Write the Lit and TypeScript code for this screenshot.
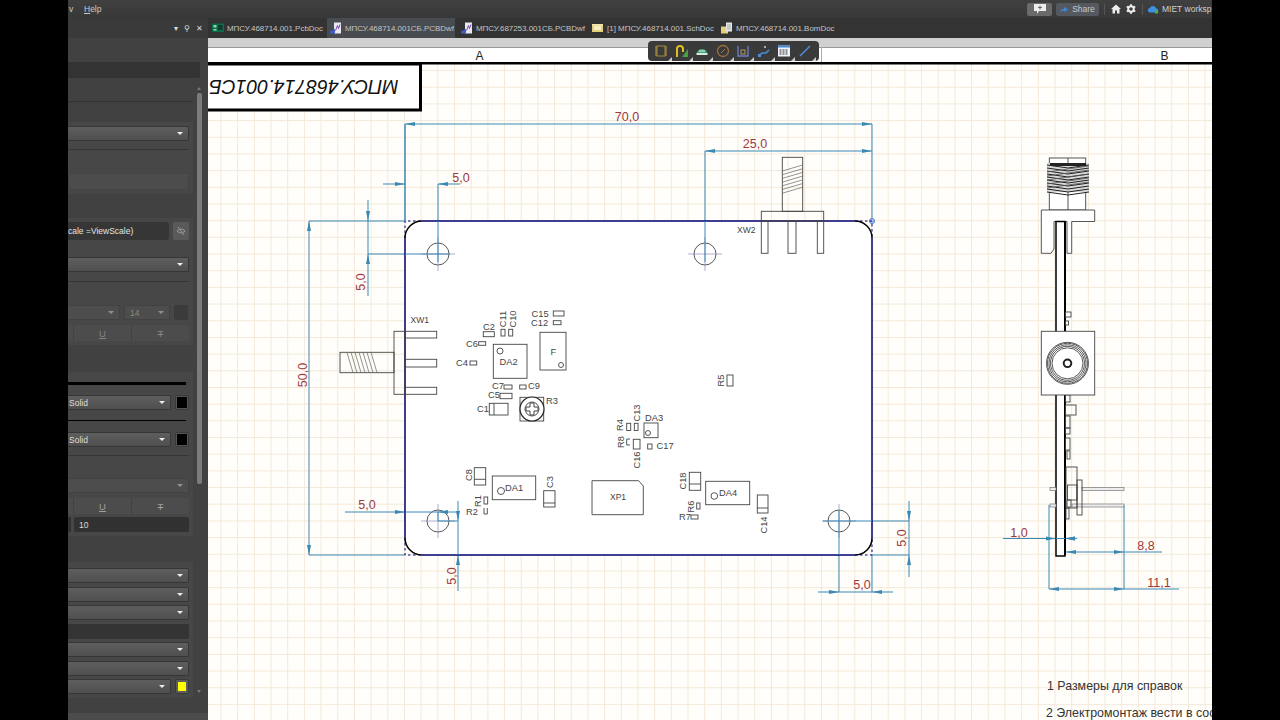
import { LitElement, html, css, svg } from "lit";
import { customElement } from "lit/decorators.js";

type Row = { k: string; g: number; t?: string; h?: number; c?: string };

const SECTIONS: { gap: number; rows: Row[] }[] = [
  { gap: 20, rows: [
    { k: "select", g: 4 }, { k: "div", g: 8 }, { k: "input", g: 23, h: 17, c: "faint" } ] },
  { gap: 24, rows: [
    { k: "scale", g: 4, t: "cale =ViewScale)" }, { k: "select", g: 17 }, { k: "div", g: 9 },
    { k: "font", g: 23 }, { k: "toggles", g: 5, c: "off" } ] },
  { gap: 27, rows: [
    { k: "black", g: 10, h: 3 }, { k: "solid", g: 10 }, { k: "black", g: 10, h: 1 }, { k: "solid", g: 11 },
    { k: "div", g: 8 }, { k: "select", g: 22, c: "off" }, { k: "toggles", g: 5 }, { k: "num", g: 3, t: "10" } ] },
  { gap: 26, rows: [
    { k: "select", g: 6 }, { k: "select", g: 3.5 }, { k: "select", g: 3.5 }, { k: "input", g: 3.5, h: 15 },
    { k: "select", g: 3.5 }, { k: "select", g: 3.5 }, { k: "color", g: 3.5 } ] },
];

const TABS = [
  { t: "МПСУ.468714.001.PcbDoc", i: "pcb" },
  { t: "МПСУ.468714.001СБ.PCBDwf", i: "dwf", on: true },
  { t: "МПСУ.687253.001СБ.PCBDwf", i: "dwf" },
  { t: "[1] МПСУ.468714.001.SchDoc", i: "sch" },
  { t: "МПСУ.468714.001.BomDoc", i: "bom" },
];

const tabIcon = (i: string) => {
  if (i === "pcb") return svg`<rect x="0" y="1.5" width="12" height="8.5" fill="#0f6b4a"/><rect x="1.5" y="3" width="3" height="2.5" fill="#7fe0b0"/><rect x="6" y="3" width="4.5" height="5" fill="#173a2c"/><rect x="1.5" y="7" width="3" height="1.5" fill="#7fe0b0"/>`;
  if (i === "dwf") return svg`<path d="M4 0.5h7v11H4z" fill="#e8e8f0"/><path d="M5.5 8.5l2-5 1 3 1.500-4" stroke="#7a3fb0" fill="none"/><path d="M0 9.500l5-2.500v4.500H0z" fill="#3f5cc8"/>`;
  if (i === "sch") return svg`<rect x="0" y="2" width="11" height="8" fill="#e6cf78"/><rect x="0" y="2" width="11" height="1.500" fill="#f3e6ae"/><rect x="2" y="4" width="7" height="4" fill="#f5eec8"/>`;
  return svg`<rect x="0" y="4.500" width="7" height="7" fill="#e6cf78"/><rect x="5" y="0.500" width="6" height="9" fill="#e4e6ea"/><path d="M6 3h4M6 5h4M6 7h4" stroke="#8a93a0" stroke-width=".7"/>`;
};

const TOOLS = [
  svg`<rect x="3" y="2" width="8" height="10" fill="none" stroke="#a98a3a"/><path d="M1 3h2M1 5h2M1 7h2M1 9h2M1 11h2M11 3h2M11 5h2M11 7h2M11 9h2M11 11h2" stroke="#b89a44"/>`,
  svg`<path d="M2 13V5a3 3 0 0 1 6 0v3" fill="none" stroke="#e0c020" stroke-width="2"/><path d="M7 13l6-8v8z" fill="#48a040"/><circle cx="5" cy="4.500" r="1" fill="#333"/>`,
  svg`<path d="M2 9a5 4 0 0 1 10 0z" fill="#46a078"/><rect x="1.500" y="9" width="11" height="2" fill="#d8e8e0"/><path d="M4 7h6" stroke="#cfe"/>`,
  svg`<circle cx="7" cy="7" r="5.500" fill="none" stroke="#a0703a" stroke-width="1.300"/><path d="M5 9l4-4" stroke="#a0703a"/>`,
  svg`<path d="M2 2v10h10V2" fill="none" stroke="#6f7fc8" stroke-width="1.300"/><rect x="5" y="6" width="4" height="4" fill="none" stroke="#b09a60"/>`,
  svg`<path d="M2 12l3-3h4l3-3" fill="none" stroke="#4a90d8" stroke-width="1.500"/><circle cx="8" cy="3" r="1" fill="#c8d0e0"/><rect x="1" y="10" width="3" height="3" fill="#4a90d8"/>`,
  svg`<rect x="1" y="1.500" width="12" height="11" fill="#f0f4fa"/><rect x="1" y="1.500" width="12" height="2" fill="#3f88d8"/><path d="M2.500 6h9M2.500 8h9M2.500 10h9" stroke="#333" stroke-dasharray="2 1"/>`,
  svg`<path d="M2 12L12 2" stroke="#4f8fd8" stroke-width="1.500"/>`,
];

const DIM = "#3a88b4";
const L = (x1: number, y1: number, x2: number, y2: number) =>
  svg`<line class="dim" x1=${x1} y1=${y1} x2=${x2} y2=${y2}></line>`;
const A = (x: number, y: number, d: "l" | "r" | "u" | "d") => {
  const n = 10, w = 2;
  const p = d === "r" ? `${x},${y} ${x - n},${y - w} ${x - n},${y + w}`
    : d === "l" ? `${x},${y} ${x + n},${y - w} ${x + n},${y + w}`
    : d === "d" ? `${x},${y} ${x - w},${y - n} ${x + w},${y - n}`
    : `${x},${y} ${x - w},${y + n} ${x + w},${y + n}`;
  return svg`<polygon points=${p} fill=${DIM}></polygon>`;
};
const DT = (x: number, y: number, t: string, rot = false) =>
  svg`<text class="dt" x=${x} y=${y} transform=${rot ? `rotate(-90 ${x} ${y})` : ""}>${t}</text>`;
const R = (x: number, y: number, x2: number, y2: number) =>
  svg`<rect class="c" x=${x} y=${y} width=${x2 - x} height=${y2 - y}></rect>`;
const LB = (x: number, y: number, t: string) => svg`<text class="lb" x=${x} y=${y}>${t}</text>`;
const LX = (x: number, y: number, t: string) => svg`<text class="lb xw" x=${x} y=${y}>${t}</text>`;
const LV = (x: number, y: number, t: string) =>
  svg`<text class="lb mid" x=${x} y=${y} transform="rotate(-90 ${x} ${y})">${t}</text>`;
const C = (x: number, y: number, r: number) => svg`<circle class="c" cx=${x} cy=${y} r=${r}></circle>`;
const H = (x: number, y: number) => svg`
  <circle class="c" cx=${x} cy=${y} r="11"></circle>
  <line class="cross" x1=${x - 17} y1=${y} x2=${x + 17} y2=${y}></line>
  <line class="cross" x1=${x} y1=${y - 17} x2=${x} y2=${y + 17}></line>`;

const range = (n: number) => Array.from({ length: n }, (_, i) => i);
const GX = range(62).map((i) => 204.3 + i * 16.68);
const GY = range(42).map((i) => 37.2 + i * 16.68).filter((y) => y > 64);

const board = svg`
  <rect x="405" y="221" width="467" height="334" rx="17" fill="#fff"></rect>
  <path d="M405 238V221H422M855 221H872V238M405 538V555H422M855 555H872V538" fill="none" stroke="#000080" stroke-dasharray="2.500 2.500"></path>
  <path d="M422 221H855M872 238V538M855 555H422M405 538V238" fill="none" stroke="#000070" stroke-width="1.500"></path>
  <path d="M405 238A17 17 0 0 1 422 221M855 221A17 17 0 0 1 872 238M872 538A17 17 0 0 1 855 555M422 555A17 17 0 0 1 405 538" fill="none" stroke="#000" stroke-width="1.500"></path>
`;

const parts = svg`
  ${H(438, 254)}${H(705, 254)}${H(438, 521)}${H(839, 521)}
  ${R(782.3, 157.3, 802.7, 211.3)}
  ${range(7).map((i) => svg`<line class="th" x1="782.300" y1=${171 + i * 3.7} x2="802.700" y2=${165 + i * 3.7}></line>`)}
  ${R(761.3, 211.3, 823.7, 221)}${R(761.3, 221, 768, 253.3)}${R(788, 221, 796, 253.3)}${R(817.3, 221, 823.7, 253.3)}
  ${LX(737, 232.5, "XW2")}
  ${R(340, 352.3, 394, 372.7)}
  ${range(7).map((i) => svg`<line class="th" x1=${347 + i * 4} y1="352.300" x2=${353 + i * 4} y2="372.700"></line>`)}
  ${R(394, 331.3, 405, 394.3)}${R(405, 331.3, 436.7, 338)}${R(405, 359.3, 436.7, 367)}${R(405, 387.3, 436.7, 394.3)}
  ${LX(410.5, 323, "XW1")}
  ${LB(531.5, 316.5, "C15")}${R(553.3, 311, 564, 316)}
  ${LB(531, 326, "C12")}${R(553.3, 320.7, 561, 324.700)}
  ${LV(506, 319, "C11")}${LV(516, 319, "C10")}${R(501, 329.3, 505, 336)}${R(508.7, 329.3, 512.7, 336)}
  ${LB(483, 329.5, "C2")}${R(483.3, 331.7, 494.3, 336.7)}
  ${LB(466, 347, "C6")}${R(478.7, 341.7, 485.7, 345.3)}
  ${LB(456, 366, "C4")}${R(470, 361, 476.7, 365)}
  ${R(493.3, 344.3, 527, 378.3)}${C(500, 351, 3)}${LB(499.5, 365, "DA2")}
  ${R(540, 332.3, 566, 370)}${C(561, 365, 2.5)}${LB(550.5, 355, "F")}
  ${LB(492, 389, "C7")}${R(504, 385, 512, 389)}${R(519.7, 385, 526, 389)}${LB(528, 389, "C9")}
  ${LB(488, 398, "C5")}${R(500, 393.3, 512, 398.7)}
  ${LB(477, 412, "C1")}${R(489.3, 403.3, 508, 415)}<line class="c" x1="494" y1="403.300" x2="494" y2="415"></line>
  ${R(520, 397.3, 543.7, 421)}
  <circle cx="532" cy="409" r="12" fill="#fff" stroke="#222" stroke-width="1.200"></circle>
  ${C(532, 409, 7)}
  <path d="M530 403h4v4h4v4h-4v4h-4v-4h-4v-4h4z" fill="none" stroke="#444"></path>
  ${LB(546, 404, "R3")}
  ${LV(640, 413, "C13")}${LV(622.5, 425, "R4")}${LV(624, 442, "R8")}${LV(640, 460, "C16")}
  ${R(626.7, 423.3, 630.7, 430.5)}${R(634.3, 423.3, 638, 430.5)}
  <path class="c" d="M630 439h-3.300v6H630"></path>
  ${R(633.3, 439.3, 640, 449)}
  ${LB(645, 420.5, "DA3")}${R(644, 423, 658, 437.7)}${C(648, 433, 2.5)}
  ${R(647.7, 444, 652, 449)}${LB(656.5, 449, "C17")}
  ${R(474.3, 467.7, 485.7, 485)}<line class="c" x1="474.300" y1="479.300" x2="485.700" y2="479.300"></line>${LV(471.5, 475, "C8")}
  ${R(492.3, 476, 535.7, 499.7)}${C(501, 491, 3.5)}${LB(505, 491, "DA1")}
  ${R(543.7, 490.7, 555, 507)}<line class="c" x1="543.700" y1="503" x2="555" y2="503"></line>${LV(553, 482, "C3")}
  ${LV(481, 501, "R1")}${R(484, 497, 487.7, 504)}${LB(466, 514.5, "R2")}
  <path class="c" d="M484 508v6h3.300v-6"></path>
  <path class="c" d="M592 480.700H638.700L643.300 486V514.700H592Z"></path>
  ${LX(610, 500, "XP1")}
  ${LV(724, 380.5, "R5")}${R(727, 375, 733, 386)}
  ${R(689.3, 472.3, 700.7, 490.3)}<line class="c" x1="689.300" y1="484" x2="700.700" y2="484"></line>${LV(686, 481, "C18")}
  ${R(705.7, 481.3, 749.7, 504.7)}${C(714.3, 496, 3.3)}${LB(719, 496, "DA4")}
  ${R(757.3, 495, 768, 513)}<line class="c" x1="757.300" y1="508" x2="768" y2="508"></line>${LV(767, 525, "C14")}
  ${LV(694, 506.5, "R6")}${R(696.7, 503, 700, 509)}${LB(679, 520, "R7")}${R(691, 515, 698, 519)}
`;

const sideView = svg`
  <rect class="c w" x="1049.300" y="158" width="36.400" height="52"></rect>
  <line class="c" x1="1068" y1="158" x2="1068" y2="210"></line>
  <rect x="1047" y="163" width="42" height="29" fill="#d8d8d8"></rect>
  ${range(10).map((i) => svg`<path d="M1047 ${165 + i * 3}L1068 ${168 + i * 3}L1089 ${165 + i * 3}" fill="none" stroke="#222" stroke-width="1"></path>`)}
  ${range(5).map((i) => svg`<path d="M1047 ${172 + i * 4}L1089 ${166 + i * 4}" fill="none" stroke="#555" stroke-width=".8"></path>`)}
  <rect x="1050" y="163" width="36" height="3" fill="#222"></rect>
  <path class="c w" d="M1041.300 210H1094.700V221.500H1071.700V253.300H1067V221.500H1054V249L1051 253.300H1041.300Z"></path>
  <rect x="1056" y="221.500" width="9" height="334.500" fill="#fff" stroke="#000" stroke-width="1.500"></rect>
  <line x1="1065" y1="222" x2="1065" y2="555" stroke="#000" stroke-width="2"></line>
  ${R(1065.5, 312, 1071, 317)}${R(1065.5, 321, 1068.5, 325)}
  ${R(1065.5, 395, 1070, 402)}${R(1065.5, 405, 1076, 415)}${R(1065.5, 416, 1070, 428)}
  ${R(1065.5, 428, 1070, 434)}${R(1065.5, 438, 1070, 450)}
  <rect class="c" x="1067" y="451" width="3" height="8"></rect>
  <rect class="c w" x="1041.300" y="331.300" width="53.400" height="63.700"></rect>
  ${[21, 20, 18.5, 17, 15.5].map((r) => svg`<circle class="c" cx="1067.500" cy="363.300" r=${r}></circle>`)}
  <circle cx="1067.500" cy="363.300" r="3.800" fill="#fff" stroke="#222" stroke-width="2"></circle>
  <rect class="pin" x="1050" y="487.500" width="6" height="3"></rect>
  <rect class="pin" x="1050" y="504" width="6" height="3"></rect>
  <rect class="pin" x="1082" y="487.500" width="42" height="3"></rect>
  <rect class="pin" x="1072" y="504" width="52" height="3"></rect>
  ${R(1066, 467, 1077, 508)}${R(1077, 480, 1082, 515)}${R(1067.5, 485, 1077, 500)}${R(1067, 500, 1071, 507)}${R(1066, 508, 1069, 519)}
`;

const dims = svg`
  ${L(405, 124, 872, 124)}${A(405, 124, "l")}${A(872, 124, "r")}${L(405, 124, 405, 221)}${L(872, 124, 872, 221)}${DT(627, 121, "70,0")}
  ${L(705, 151, 872, 151)}${A(705, 151, "l")}${A(872, 151, "r")}${L(705, 151, 705, 262)}${DT(755, 148, "25,0")}
  ${L(383, 184, 405, 184)}${A(405, 184, "r")}${L(438, 184, 460, 184)}${A(438, 184, "l")}${L(438, 184, 438, 262)}${DT(461, 182, "5,0")}
  ${L(309, 221, 309, 555)}${A(309, 221, "u")}${A(309, 555, "d")}${L(309, 221, 405, 221)}${L(309, 555, 405, 555)}${DT(307, 375, "50,0", true)}
  ${L(368, 200, 368, 296)}${A(368, 221, "d")}${A(368, 254, "u")}${L(368, 254, 450, 254)}${DT(365, 282, "5,0", true)}
  ${L(345, 512, 458, 512)}${A(405, 512, "r")}${A(438, 512, "l")}${DT(367, 509, "5,0")}
  ${L(458, 501, 458, 591)}${A(458, 521, "d")}${A(458, 555, "u")}${L(438, 521, 458, 521)}${DT(456, 576, "5,0", true)}
  ${L(818, 592, 893, 592)}${A(839, 592, "r")}${A(872, 592, "l")}${L(839, 510, 839, 592)}${L(872, 555, 872, 592)}${DT(862, 589, "5,0")}
  ${L(909, 501, 909, 577)}${A(909, 521, "d")}${A(909, 555, "u")}${L(823, 521, 909, 521)}${L(872, 555, 909, 555)}${DT(906, 538, "5,0", true)}
  ${L(1003, 538.5, 1077, 538.5)}${A(1056, 538.5, "r")}${A(1065, 538.5, "l")}${DT(1019, 537, "1,0")}
  ${L(1066, 552, 1162, 552)}${A(1066, 552, "l")}${A(1124, 552, "r")}${DT(1146, 550, "8,8")}
  ${L(1049, 589, 1179, 589)}${A(1049, 589, "l")}${A(1124, 589, "r")}${DT(1159, 587, "11,1")}
  ${L(1049, 505, 1049, 589)}${L(1124, 505, 1124, 589)}
  <circle cx="872" cy="221" r="2.500" fill="#b8c8e8" stroke="#4a78c8"></circle>
`;

@customElement("app-root")
export class AppRoot extends LitElement {
  static styles = css`
    :host { display: block; width: 1280px; height: 720px; background: #000; overflow: hidden;
      font-family: "Liberation Sans", Arial, sans-serif; }
    .frame { width: 1144px; height: 720px; margin-left: 68px; display: flex; flex-direction: column; overflow: hidden; }
    .top { height: 18px; flex: none; display: flex; align-items: center; background: linear-gradient(#404040, #383838);
      color: #c8c8c8; font-size: 8.5px; }
    .menu { width: 16px; flex: none; padding-left: 1px; box-sizing: border-box; }
    .help { flex: 1; }
    .u { text-decoration: underline; }
    .btn { height: 13px; border-radius: 2px; display: flex; align-items: center; justify-content: center; gap: 4px; flex: none; }
    .msg { width: 25px; background: #6a6a6a; margin-right: 4px; }
    .share { width: 43px; background: #54585f; }
    .sep { width: 1px; height: 11px; background: #555; flex: none; }
    .first { margin-left: 5px; }
    .ico { display: block; flex: none; }
    .home { margin: 0 1px 0 6px; }
    .gear { margin: 0 6px 0 4px; }
    .cloud { margin: 0 3px 0 4px; }
    .ws { width: 50px; white-space: nowrap; overflow: hidden; flex: none; color: #d0d0d0; font-size: 8.5px; }
    .tabs { height: 20px; flex: none; display: flex; background: #333; }
    .tabs-left { width: 141px; flex: none; }
    .tab { height: 20px; display: flex; align-items: center; gap: 3px; padding: 0 1px 0 3px; margin-right: 3px;
      box-sizing: border-box; color: #c4c4c4; font-size: 7.95px; white-space: nowrap; }
    .tab.on { background: #484b50; }
    .body { flex: 1; display: flex; min-height: 0; }
    .panel { width: 140px; flex: none; margin-top: -20px; display: flex; flex-direction: column; background: #414141; position: relative; z-index: 1; }
    .phead { height: 20px; flex: none; display: flex; align-items: center; justify-content: flex-end; gap: 6px; padding-right: 5px;
      background: #3a3a3a; color: #ddd; font-size: 8px; }
    .ptop { height: 47px; flex: none; box-sizing: border-box; padding: 24px 8px 0 0; }
    .pinput { height: 16px; background: #333; border-radius: 0 2px 2px 0; }
    .pscroll { flex: 1; display: flex; min-height: 0; }
    .content { width: 125px; flex: none; display: flex; flex-direction: column; padding-top: 16px; box-sizing: border-box; }
    .rule { height: 1px; background: #333; flex: none; }
    .sec { background: #474747; padding-right: 4px; padding-bottom: 4px; display: flex; flex-direction: column; flex: none; }
    .select { height: 15px; box-sizing: border-box; background: linear-gradient(#5e5e5e, #4f4f4f); border: 1px solid #363636; border-left: 0;
      border-radius: 0 2px 2px 0; display: flex; align-items: center; justify-content: space-between; padding: 0 5px 0 1px; color: #ddd; font-size: 8.5px; flex: auto; }
    .select.off { background: #4d4d4d; border-color: #424242; }
    .select.off .tri { border-top-color: #909090; }
    .tri { width: 0; height: 0; border: 3px solid transparent; border-top: 3px solid #eee; border-bottom: 0; flex: none; }
    .divline { height: 1px; background: #363636; }
    .input { background: #343434; border-radius: 0 2px 2px 0; }
    .input.faint { background: #4c4c4c; border: 1px solid #444; box-sizing: border-box; }
    .flex { display: flex; gap: 4px; }
    .sw { width: 14px; height: 15px; box-sizing: border-box; flex: none; background: #555; border: 1px solid #3a3a3a; border-radius: 2px; padding: 1px; }
    .sw i { display: block; width: 100%; height: 100%; background: #000; }
    .sw.y { background: #5c5c5c; padding: 2px; width: 14px; }
    .sw.y i { background: #ff0; }
    .sw.dim { background: #3b3b3b; }
    .sw.dim i { background: #3b3b3b; }
    .scale { flex: auto; height: 18px; background: #363636; color: #e4e4e4; font-size: 8.5px; display: flex; align-items: center; border-radius: 0 2px 2px 0; white-space: nowrap; }
    .eye { width: 16px; height: 18px; flex: none; background: #5a5a5a; border-radius: 2px; display: flex; align-items: center; justify-content: center; }
    .small { width: 46px; flex: none; background: #3d3d3d; border-color: #3d3d3d; color: #888; padding-left: 5px; border-radius: 2px; border-left: 1px solid #3d3d3d; }
    .grow { width: 52px; flex: none; }
    .tg { display: flex; height: 16px; background: #4c4c4c; border-radius: 0 2px 2px 0; color: #a0a0a0; font-size: 9.5px; }
    .tg.off { color: #858585; }
    .tg span { display: flex; align-items: center; justify-content: center; border-left: 1px solid #414141; }
    .tg .a { width: 5px; border-left: 0; }
    .tg .b { width: 57px; text-decoration: underline; }
    .tg .c { flex: 1; text-decoration: line-through; text-decoration-thickness: 1px; }
    .num { display: flex; gap: 3px; height: 15px; }
    .num .l { width: 3px; background: #333; flex: none; }
    .num .r { flex: 1; background: #313131; color: #ddd; font-size: 8.5px; display: flex; align-items: center; padding-left: 5px; border-radius: 2px; }
    .sb { width: 15px; flex: none; display: flex; flex-direction: column; align-items: flex-start; padding: 2px 0 0 4px; box-sizing: border-box; }
    .sbup { width: 0; height: 0; border: 2.500px solid transparent; border-bottom: 3px solid #777; border-top: 0; margin-bottom: 3px; }
    .thumb { width: 5px; height: 391px; background: #7c7c7c; border-radius: 2px; }
    .sbdn { width: 0; height: 0; border: 2.500px solid transparent; border-top: 3px solid #777; border-bottom: 0; margin-top: auto; margin-bottom: 20px; }
    .pfoot { height: 7px; flex: none; background: #4b4b4b; }
    .canvas { flex: 1; position: relative; background: #fff; min-width: 0; }
    .canvas > svg { display: block; }
    .toolbar { position: absolute; left: 440px; top: 3px; width: 171px; height: 20px; box-sizing: border-box; background: #3a3a3a; border-radius: 4px;
      display: flex; align-items: center; padding-left: 6px; gap: 6.500px; }
    .tool { width: 14px; height: 14px; position: relative; flex: none; }
    .tool svg { display: block; }
    .tool::after { content: ""; position: absolute; right: -4px; bottom: -3px; border: 2px solid transparent; border-right-color: #ccc; border-bottom-color: #ccc; }
    .dim { stroke: #3a88b4; stroke-width: 1; }
    .dt { fill: #9c383e; font-size: 12.500px; text-anchor: middle; font-family: "Liberation Sans", Arial, sans-serif; }
    .c { fill: none; stroke: #444; stroke-width: .9; }
    .c.w { fill: #fff; }
    .th { stroke: #666; stroke-width: .7; }
    .cross { stroke: #8a8ab8; stroke-width: .7; }
    .lb { fill: #444; font-size: 9.300px; font-family: "Liberation Sans", Arial, sans-serif; }
    .xw { font-size: 8.500px; }
    .mid { text-anchor: middle; }
    .pin { fill: #eee; stroke: #777; stroke-width: .7; }
    .hdr { fill: #222; font-size: 12px; text-anchor: middle; font-family: "Liberation Sans", Arial, sans-serif; }
    .ttl { fill: #111; font-size: 19.500px; font-style: italic; font-family: "Liberation Sans", Arial, sans-serif; }
    .note { fill: #333; font-size: 12.400px; font-family: "Liberation Sans", Arial, sans-serif; }
  `;

  private row(r: Row) {
    const st = `margin-top:${r.g}px`;
    const tri = html`<span class="tri"></span>`;
    switch (r.k) {
      case "select": return html`<div class="select ${r.c ?? ""}" style=${st}><span></span>${tri}</div>`;
      case "div": return html`<div class="divline" style=${st}></div>`;
      case "input": return html`<div class="input ${r.c ?? ""}" style="${st};height:${r.h}px"></div>`;
      case "black": return html`<div style="${st};height:${r.h}px;background:#000;margin-right:3px"></div>`;
      case "scale": return html`<div class="flex" style=${st}><div class="scale">${r.t}</div>
        <div class="eye"><svg class="ico" width="10" height="10" viewBox="0 0 10 10"><path d="M1 5q4-4 8 0q-4 4-8 0z" fill="none" stroke="#999"/><path d="M2 1l6 8" stroke="#999"/></svg></div></div>`;
      case "font": return html`<div class="flex" style=${st}><div class="select off grow"><span></span>${tri}</div>
        <div class="select off small"><span>14</span>${tri}</div><div class="sw dim"><i></i></div></div>`;
      case "toggles": return html`<div class="tg ${r.c ?? ""}" style=${st}><span class="a"></span><span class="b">U</span><span class="c">T</span></div>`;
      case "solid": return html`<div class="flex" style=${st}><div class="select"><span>Solid</span>${tri}</div><div class="sw"><i></i></div></div>`;
      case "color": return html`<div class="flex" style=${st}><div class="select"><span></span>${tri}</div><div class="sw y"><i></i></div></div>`;
      case "num": return html`<div class="num" style=${st}><div class="l"></div><div class="r">${r.t}</div></div>`;
    }
    return html``;
  }

  render() {
    return html`<div class="frame">
      <div class="top">
        <span class="menu">v</span>
        <span class="help"><span class="u">H</span>elp</span>
        <div class="btn msg"><svg class="ico" width="12" height="10" viewBox="0 0 12 10"><path d="M0 0h12v7H5L3 10V7H0z" fill="#eee"/><path d="M6 1.500v4M4 3.500h4" stroke="#666"/></svg></div>
        <div class="btn share"><svg class="ico" width="8" height="7" viewBox="0 0 8 7"><path d="M0 6q1-3 4-3V1l4 2.500L4 6V4.500Q2 4.500 0 6z" fill="#3f88d8"/></svg><span>Share</span></div>
        <div class="sep first"></div>
        <svg class="ico home" width="10" height="10" viewBox="0 0 10 10"><path d="M5 .5L0 5h1.500v4.500h2.500V6.500h2v3h2.500V5H10z" fill="#eee"/></svg>
        <svg class="ico gear" width="10" height="10" viewBox="0 0 10 10"><circle cx="5" cy="5" r="2.800" fill="none" stroke="#eee" stroke-width="2"/><path d="M5 0v2M5 8v2M0.700 2.500l1.700 1M7.600 6.500l1.700 1M.7 7.500l1.700-1M7.600 3.500l1.700-1" stroke="#eee" stroke-width="1.500"/></svg>
        <div class="sep"></div>
        <svg class="ico cloud" width="12" height="10" viewBox="0 0 12 10"><path d="M2.500 8.500a2.300 2.300 0 0 1 .3-4.500a3.500 3.500 0 0 1 6.500 .5a2 2 0 0 1 0 4z" fill="#3f8ee0"/><circle cx="9.500" cy="8" r="1.800" fill="#49b34a"/></svg>
        <span class="ws">MIET worksp</span>
      </div>
      <div class="tabs">
        <div class="tabs-left"></div>
        ${TABS.map((t) => html`<div class="tab ${t.on ? "on" : ""}"><svg class="ico" width="12" height="12" viewBox="0 0 12 12">${tabIcon(t.i)}</svg><span>${t.t}</span></div>`)}
      </div>
      <div class="body">
        <div class="panel">
          <div class="phead"><span>▾</span><span>⚲</span><span>✕</span></div>
          <div class="ptop"><div class="pinput"></div></div>
          <div class="pscroll">
            <div class="content">
              <div class="rule"></div>
              ${SECTIONS.map((s) => html`<div class="sec" style="margin-top:${s.gap}px">${s.rows.map((r) => this.row(r))}</div>`)}
            </div>
            <div class="sb"><div class="sbup"></div><div class="thumb"></div><div class="sbdn"></div></div>
          </div>
          <div class="pfoot"></div>
        </div>
        <div class="canvas">
          <svg width="1004" height="682" viewBox="208 38 1004 682">
            <rect x="208" y="38" width="1004" height="682" fill="#fffefa"></rect>
            ${GX.map((x) => svg`<line x1=${x} y1="64" x2=${x} y2="720" stroke="#f4e9da"></line>`)}
            ${GY.map((y) => svg`<line x1="208" y1=${y} x2="1212" y2=${y} stroke="#f4e9da"></line>`)}
            <rect x="208" y="38" width="1004" height="9" fill="#d0d0d0"></rect>
            <rect x="208" y="47" width="1004" height="16" fill="#fff"></rect>
            <line x1="208" y1="47.500" x2="1212" y2="47.500" stroke="#999"></line>
            <line x1="821.500" y1="47" x2="821.500" y2="62" stroke="#aaa"></line>
            <rect x="208" y="62" width="1004" height="2.500" fill="#000"></rect>
            <text class="hdr" x="479.500" y="60">A</text>
            <text class="hdr" x="1164.500" y="60">B</text>
            <path d="M200 64H420.500V110H200" fill="#fff" stroke="#000" stroke-width="3"></path>
            <text class="ttl" x="398.500" y="79.500" transform="rotate(180 398.500 79.500)">МПСУ.468714.001СБ</text>
            ${dims}
            ${board}
            ${parts}
            ${L(405, 124, 405, 221)}${L(705, 221, 705, 262)}${L(438, 221, 438, 262)}${L(405, 254, 450, 254)}
            ${L(438, 512, 438, 521)}${L(405, 512, 458, 512)}${L(438, 521, 458, 521)}${L(458, 501, 458, 555)}
            ${L(839, 510, 839, 555)}${L(823, 521, 872, 521)}
            ${A(438, 512, "l")}${A(458, 521, "d")}
            ${sideView}
            ${L(1056, 538.5, 1065, 538.5)}${A(1065, 538.5, "l")}
            <text class="note" x="1047" y="690">1 Размеры для справок</text>
            <text class="note" x="1046" y="717">2 Электромонтаж вести в соо</text>
          </svg>
          <div class="toolbar">
            ${TOOLS.map((t) => html`<div class="tool"><svg width="14" height="14" viewBox="0 0 14 14">${t}</svg></div>`)}
          </div>
        </div>
      </div>
    </div>`;
  }
}
